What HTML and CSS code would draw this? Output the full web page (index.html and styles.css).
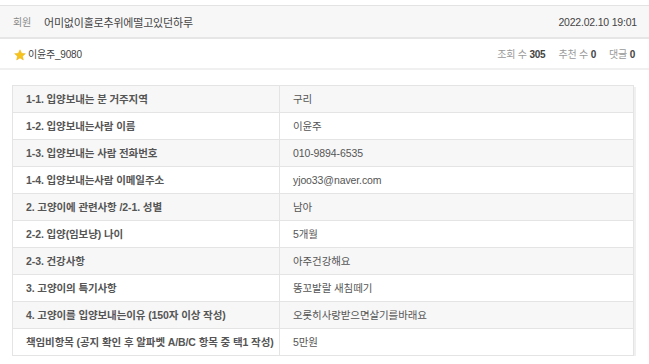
FILE: index.html
```html
<!DOCTYPE html>
<html lang="ko">
<head>
<meta charset="utf-8">
<link rel="stylesheet" href="styles.css">
</head>
<body>
<div class="page">
  <div class="head">
    <span class="cat">회원</span>
    <span class="title">어미없이홀로추위에떨고있던하루</span>
    <span class="date">2022.02.10 19:01</span>
  </div>
  <div class="info">
    <svg class="star" width="12" height="12" viewBox="0 0 24 24"><path d="M12 1.5l3.2 7 7.6.8-5.7 5.1 1.6 7.5L12 18l-6.7 3.9 1.6-7.5L1.2 9.3l7.6-.8z" fill="#f6c31c" stroke="#e6a800" stroke-width="0.8"/></svg>
    <span class="author">이윤주_9080</span>
    <span class="stats">
      <span class="stat">조회 수 <b>305</b></span>
      <span class="stat">추천 수 <b>0</b></span>
      <span class="stat">댓글 <b>0</b></span>
    </span>
  </div>
  <table class="fields">
    <tr><th>1-1. 입양보내는 분 거주지역</th><td>구리</td></tr>
    <tr><th>1-2. 입양보내는사람 이름</th><td>이윤주</td></tr>
    <tr><th>1-3. 입양보내는 사람 전화번호</th><td>010-9894-6535</td></tr>
    <tr><th>1-4. 입양보내는사람 이메일주소</th><td>yjoo33@naver.com</td></tr>
    <tr><th>2. 고양이에 관련사항 /2-1. 성별</th><td>남아</td></tr>
    <tr><th>2-2. 입양(임보냥) 나이</th><td>5개월</td></tr>
    <tr><th>2-3. 건강사항</th><td>아주건강해요</td></tr>
    <tr><th>3. 고양이의 특기사항</th><td>똥꼬발랄 새침떼기</td></tr>
    <tr><th>4. 고양이를 입양보내는이유 (150자 이상 작성)</th><td>오롯히사랑받으면살기를바래요</td></tr>
    <tr><th>책임비항목 (공지 확인 후 알파벳 A/B/C 항목 중 택1 작성)</th><td>5만원</td></tr>
  </table>
</div>
</body>
</html>
```
FILE: styles.css
```css
html, body {
  margin: 0;
  padding: 0;
  background: #fff;
}
body {
  font-family: "Liberation Sans", "Noto Sans CJK KR", sans-serif;
  font-size: 10px;
  color: #555;
  letter-spacing: -0.2px;
}
.page {
  padding-top: 5px;
}
.head {
  display: flex;
  align-items: center;
  height: 31px;
  background: #f7f7f7;
  border-top: 1px solid #e3e3e3;
  border-bottom: 2px solid #e6e6e6;
  padding: 0 12px 0 13px;
}
.cat {
  color: #888;
  margin-right: 13px;
}
.title {
  color: #444;
  font-size: 11px;
}
.date {
  margin-left: auto;
  color: #444;
  font-size: 10.5px;
}
.info {
  display: flex;
  align-items: center;
  height: 29px;
  padding: 0 14px 0 14px;
  border-bottom: 2px solid #f0f0f0;
}
.star {
  margin-right: 2px;
  margin-top: 2px;
}
.author {
  color: #444;
}
.stats {
  margin-left: auto;
  display: flex;
  gap: 13px;
  color: #999;
}
.stat b {
  color: #444;
}
.fields {
  margin: 15px 0 0 12px;
  width: 622px;
  border-collapse: collapse;
  border: 1px solid #e4e4e4;
  box-shadow: 2px 2px 0 #f0f0f0;
  font-size: 10.5px;
  letter-spacing: -0.1px;
  line-height: 14px;
}
.fields tr {
  height: 27px;
}
.fields tr:nth-child(odd) {
  background: #f7f7f7;
}
.fields th, .fields td {
  border: 1px solid #e4e4e4;
  padding: 0 0 0 13px;
  text-align: left;
  vertical-align: middle;
}
.fields th {
  width: 253px;
  font-weight: bold;
  color: #555;
}
.fields td {
  color: #555;
}
```
